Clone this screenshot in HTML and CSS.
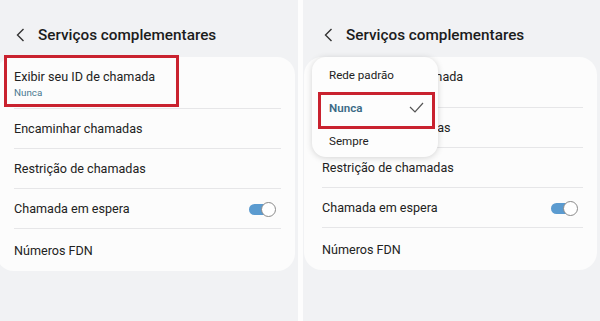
FILE: index.html
```html
<!DOCTYPE html>
<html lang="pt">
<head>
<meta charset="utf-8">
<link rel="stylesheet" href="styles.css">
</head>
<body>
<div class="page">
  <section class="panel panel-left">
    <div class="screen">
      <header class="header">
        <svg class="back" width="9" height="14" viewBox="0 0 9 14"><polyline points="7.5,1 1.5,7 7.5,13" fill="none" stroke="#333" stroke-width="1.4"/></svg>
        <h1 class="title">Serviços complementares</h1>
      </header>
      <div class="card">
        <div class="row row-tall">
          <div class="label">Exibir seu ID de chamada</div>
          <div class="sub">Nunca</div>
        </div>
        <div class="row"><div class="label">Encaminhar chamadas</div></div>
        <div class="row"><div class="label">Restrição de chamadas</div></div>
        <div class="row row-switch"><div class="label">Chamada em espera</div><span class="switch"><span class="thumb"></span></span></div>
        <div class="row row-last"><div class="label">Números FDN</div></div>
      </div>
    </div>
    <div class="highlight highlight-left"></div>
  </section>
  <div class="gap"></div>
  <section class="panel panel-right">
    <div class="screen">
      <header class="header">
        <svg class="back" width="9" height="14" viewBox="0 0 9 14"><polyline points="7.5,1 1.5,7 7.5,13" fill="none" stroke="#333" stroke-width="1.4"/></svg>
        <h1 class="title">Serviços complementares</h1>
      </header>
      <div class="card">
        <div class="row row-tall">
          <div class="label">Exibir seu ID de chamada</div>
          <div class="sub">Nunca</div>
        </div>
        <div class="row"><div class="label">Encaminhar chamadas</div></div>
        <div class="row"><div class="label">Restrição de chamadas</div></div>
        <div class="row row-switch"><div class="label">Chamada em espera</div><span class="switch"><span class="thumb"></span></span></div>
        <div class="row row-last"><div class="label">Números FDN</div></div>
      </div>
    </div>
    <div class="menu">
      <div class="menu-item">Rede padrão</div>
      <div class="menu-item menu-selected">Nunca
        <svg class="check" width="15" height="11" viewBox="0 0 15 11"><polyline points="1,5 6,10 14,1" fill="none" stroke="#555" stroke-width="1.2"/></svg>
      </div>
      <div class="menu-item">Sempre</div>
      <div class="highlight highlight-menu"></div>
    </div>
  </section>
</div>
</body>
</html>
```
FILE: styles.css
```css
* { box-sizing: border-box; }
html, body { margin: 0; padding: 0; background: #fff; }
body { font-family: Roboto, "Noto Sans", sans-serif; color: #1f1f1f; }
.page { display: flex; width: 600px; height: 321px; overflow: hidden; }
.panel { position: relative; height: 321px; background: #f1f2f4; overflow: hidden; }
.panel-left { width: 298px; }
.gap { width: 5px; background: #fdfdfd; }
.panel-right { width: 297px; }
.screen { display: flex; flex-direction: column; }
.panel-left .screen { margin-left: -4px; width: 299px; }
.panel-right .screen { margin-left: 1px; width: 293px; }
.header { display: flex; align-items: center; height: 44px; margin-top: 13px; padding-left: 20px; }
.back { display: block; margin-right: 13px; }
.title { margin: 0; font-size: 15.3px; font-weight: 500; color: #1c1c1c; letter-spacing: 0; }
.card { background: #fcfcfc; border-radius: 18px; padding: 0 14px 0 18px; }
.row { height: 40px; display: flex; flex-direction: column; justify-content: center; border-bottom: 1px solid #e6e6e8; }
.row-tall { height: 52px; padding-top: 2px; }
.panel-right .row-tall { height: 51px; }
.row-last { border-bottom: none; height: 42px; }
.row-switch { flex-direction: row; align-items: center; justify-content: space-between; }
.label { font-size: 12.6px; color: #222; }
.sub { font-size: 9.8px; color: #4a7890; margin-top: 3px; }
.switch { position: relative; width: 27px; height: 14px; margin-right: 5px; }
.switch::before { content: ""; position: absolute; left: 0; top: 2px; width: 24px; height: 11px; border-radius: 6px; background: #5b9bd0; }
.thumb { position: absolute; right: 0; top: 0; width: 15px; height: 15px; border-radius: 50%; background: #fff; border: 1px solid #8a8a8a; }
.highlight { position: absolute; border: 3px solid #c9222f; }
.highlight-left { left: 4px; top: 55px; width: 175px; height: 52px; }
.menu { position: absolute; left: 9px; top: 57px; width: 126px; height: 100px; background: #fdfdfd; border-radius: 14px; box-shadow: 0 1px 6px rgba(0,0,0,0.16); padding-top: 1px; }
.menu-item { height: 33px; display: flex; align-items: center; justify-content: space-between; padding: 0 14px 0 17px; font-size: 11.6px; color: #222; }
.menu-selected { color: #3c6a86; font-weight: 600; }
.check { display: block; }
.highlight-menu { left: 6px; top: 35px; width: 117px; height: 37px; }
```
